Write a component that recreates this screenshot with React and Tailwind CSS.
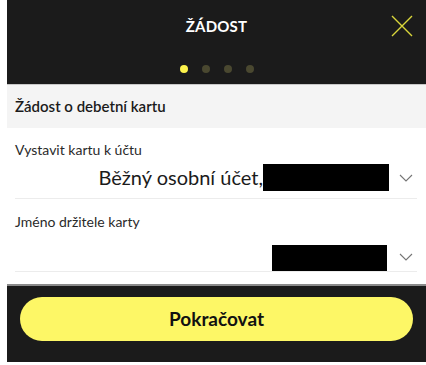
import React from 'react';

const Chevron = () => (
  <svg width="14" height="8" viewBox="0 0 14 8" fill="none" className="shrink-0">
    <path d="M1 1l6 6 6-6" stroke="#757575" strokeWidth="1.1" />
  </svg>
);

const App = () => {
  const font = { fontFamily: 'Lato, "Open Sans", sans-serif' };
  return (
    <div className="w-[426px] h-[365px] bg-white pl-[7px] overflow-hidden" style={font}>
      <div className="bg-[#1b1b1b] h-[84px] relative flex flex-col items-center">
        <h1 className="text-white font-bold text-[15px] mt-[16px] leading-[20px] tracking-[0.2px]">ŽÁDOST</h1>
        <button className="absolute right-[13px] top-[15px]">
          <svg width="22" height="22" viewBox="0 0 22 22" fill="none">
            <path d="M1 1l20 20M21 1L1 21" stroke="#d9d63b" strokeWidth="1.4" />
          </svg>
        </button>
        <div className="flex gap-[14px] mt-[29px]">
          <span className="w-[8px] h-[8px] rounded-full bg-[#fdf34c]" />
          <span className="w-[8px] h-[8px] rounded-full bg-[#4a4830]" />
          <span className="w-[8px] h-[8px] rounded-full bg-[#4a4830]" />
          <span className="w-[8px] h-[8px] rounded-full bg-[#4a4830]" />
        </div>
      </div>
      <div className="bg-[#f4f4f4] border-t border-[#c8c8c8] h-[44px] flex items-center pl-[8px] text-[15px] font-semibold text-[#1b1b1b]">
        Žádost o debetní kartu
      </div>
      <div className="pl-[8px] pr-[9px]">
        <div className="border-b border-[#ececec] pt-[13px] h-[71px]">
          <p className="text-[14px] leading-[18px] text-[#2a2a2a]">Vystavit kartu k účtu</p>
          <div className="flex items-center justify-end mt-[5px]">
            <span className="text-[20px] text-[#1b1b1b] leading-[27px]">Běžný osobní účet,</span>
            <span className="w-[126px] h-[27px] bg-black" />
            <span className="ml-[10px] mr-[4px]"><Chevron /></span>
          </div>
        </div>
        <div className="border-b border-[#ececec] pt-[14px] h-[73px]">
          <p className="text-[14px] leading-[18px] text-[#2a2a2a]">Jméno držitele karty</p>
          <div className="flex items-end justify-end mt-[14px]">
            <span className="w-[115px] h-[26px] bg-black" />
            <span className="ml-[12px] mr-[4px] mb-[10px]"><Chevron /></span>
          </div>
        </div>
      </div>
      <div className="mt-[12px] bg-[#1b1b1b] border-t-2 border-[#8a8a8a] h-[78px] pt-[11px] pl-[13px] pr-[13px]">
        <button className="w-full h-[44px] rounded-full bg-[#fdf766] text-[#111] font-bold text-[19px]">
          Pokračovat
        </button>
      </div>
    </div>
  );
};

export default App;
